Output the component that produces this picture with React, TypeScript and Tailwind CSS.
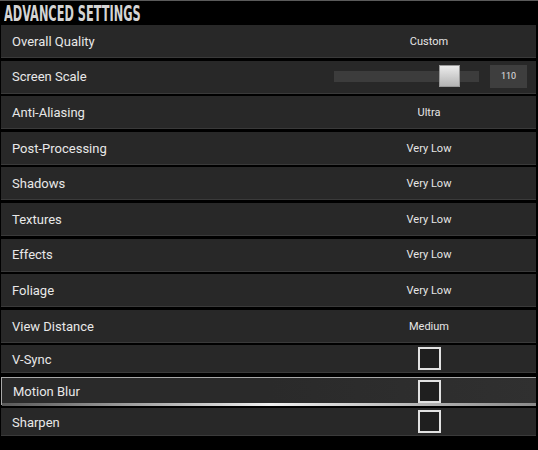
import React from "react";

type Row =
  | { label: string; kind: "value"; value: string }
  | { label: string; kind: "slider"; value: number }
  | { label: string; kind: "check"; active?: boolean };

const top: Row[] = [
  { label: "Overall Quality", kind: "value", value: "Custom" },
  { label: "Screen Scale", kind: "slider", value: 110 },
  { label: "Anti-Aliasing", kind: "value", value: "Ultra" },
  { label: "Post-Processing", kind: "value", value: "Very Low" },
  { label: "Shadows", kind: "value", value: "Very Low" },
  { label: "Textures", kind: "value", value: "Very Low" },
  { label: "Effects", kind: "value", value: "Very Low" },
  { label: "Foliage", kind: "value", value: "Very Low" },
  { label: "View Distance", kind: "value", value: "Medium" },
];

const checks: Row[] = [
  { label: "V-Sync", kind: "check" },
  { label: "Motion Blur", kind: "check", active: true },
  { label: "Sharpen", kind: "check" },
];

const labelFont = { fontFamily: "Roboto, 'DejaVu Sans', sans-serif" };

function Right({ row }: { row: Row }) {
  if (row.kind === "value") {
    return (
      <div className="w-[214px] pt-[2px] text-center text-[11px] text-[#e6e6e6]" style={labelFont}>
        {row.value}
      </div>
    );
  }
  if (row.kind === "slider") {
    return (
      <div className="flex items-center">
        <div className="relative h-[11px] w-[145px] bg-[#3c3c3c]">
          <div className="absolute left-[105px] top-[-6px] h-[22px] w-[21px] border border-[#9a9a9a] bg-gradient-to-b from-[#ececec] to-[#b4b4b4]" />
        </div>
        <div
          className="ml-[11px] mr-[9px] flex h-[23px] w-[37px] items-center justify-center bg-[#3e3e3e] text-[9px] text-[#e0e0e0]"
          style={labelFont}
        >
          {row.value}
        </div>
      </div>
    );
  }
  return (
    <div className="flex w-[214px] justify-center">
      <div className="h-[23px] w-[23px] border-2 border-[#e2e2e2] bg-[#1f1f1f]" />
    </div>
  );
}

function RowView({ row, h }: { row: Row; h: string }) {
  const active = row.kind === "check" && row.active;
  return (
    <div
      className={`relative flex items-center justify-between ${h} ${
        active
          ? "border-l border-t border-[#a8a8a8] bg-gradient-to-r from-[#2a2a2a] via-[#2a2a2a] to-[#303030]"
          : "border-b border-[#3a3a3a] bg-[#282828]"
      }`}
    >
      <div className="pl-[11px] pt-[1px] text-[13px] text-[#e8e8e8]" style={labelFont}>
        {row.label}
      </div>
      <Right row={row} />
      {active && (
        <div className="absolute bottom-[-1px] left-0 right-0 h-[3px] bg-gradient-to-r from-[#5a5a5a] via-[#f0f0f0] to-[#8a8a8a]" />
      )}
    </div>
  );
}

export default function App() {
  return (
    <div className="h-[450px] w-[538px] overflow-hidden bg-black">
      <div className="h-[1px] bg-[#5a5a5a]" />
      <div
        className="flex h-[24px] items-center pl-[4px] text-[21px] font-bold leading-none text-[#d4d4d4]"
        style={{
          fontFamily: "'DejaVu Sans Condensed', 'Liberation Sans Narrow', 'DejaVu Sans', sans-serif",
        }}
      >
        <span className="inline-block origin-left scale-x-[0.6] whitespace-nowrap pt-[2px]">ADVANCED SETTINGS</span>
      </div>
      <div className="ml-[1px] mr-[2px] flex flex-col gap-[2.6px]">
        {top.map((r) => (
          <RowView key={r.label} row={r} h="h-[33px]" />
        ))}
      </div>
      <div className="ml-[1px] mr-[2px] mt-[2.5px] flex flex-col gap-[3.5px]">
        {checks.map((r) => (
          <RowView key={r.label} row={r} h="h-[28px]" />
        ))}
      </div>
    </div>
  );
}
